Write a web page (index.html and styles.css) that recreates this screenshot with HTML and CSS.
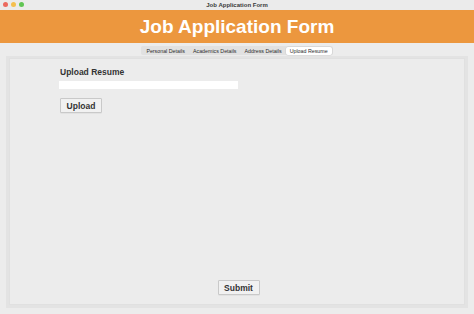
FILE: index.html
```html
<!DOCTYPE html>
<html>
<head>
<meta charset="utf-8">
<link rel="stylesheet" href="styles.css">
</head>
<body>
<div class="window">
  <div class="titlebar">
    <div class="lights">
      <span class="light red"></span>
      <span class="light yellow"></span>
      <span class="light green"></span>
    </div>
    <div class="wintitle">Job Application Form</div>
  </div>
  <div class="banner">Job Application Form</div>
  <div class="tabs">
    <div class="tabbar">
      <span class="tab">Personal Details</span>
      <span class="tab">Academics Details</span>
      <span class="tab">Address Details</span>
      <span class="tab active">Upload Resume</span>
    </div>
  </div>
  <div class="panel">
    <div class="panel-inner">
      <div class="form">
        <div class="label">Upload Resume</div>
        <div class="field"></div>
        <button class="btn upload">Upload</button>
      </div>
      <div class="footer">
        <button class="btn submit">Submit</button>
      </div>
    </div>
  </div>
</div>
</body>
</html>
```

FILE: styles.css
```css
* { box-sizing: border-box; }
html, body { margin: 0; padding: 0; }
body {
  width: 474px;
  height: 314px;
  overflow: hidden;
  font-family: "Liberation Sans", Arial, sans-serif;
  background: #ececec;
}
.window {
  display: flex;
  flex-direction: column;
  height: 314px;
}
.titlebar {
  height: 10px;
  background: #ebebeb;
  position: relative;
  display: flex;
  align-items: center;
  justify-content: center;
}
.lights {
  position: absolute;
  left: 3px;
  top: 2px;
  display: flex;
  gap: 3px;
}
.light {
  width: 5px;
  height: 5px;
  border-radius: 50%;
  display: block;
}
.red { background: #ec6a5e; }
.yellow { background: #f4bf4f; }
.green { background: #61c554; }
.wintitle {
  font-size: 6px;
  font-weight: bold;
  color: #3a3a3a;
}
.banner {
  height: 33px;
  background: #ec973e;
  color: #fff;
  font-weight: bold;
  font-size: 19px;
  display: flex;
  align-items: center;
  justify-content: center;
  padding-top: 1px;
}
.tabs {
  display: flex;
  justify-content: center;
  padding-top: 3px;
}
.tabbar {
  display: flex;
  background: #e1e1e1;
  border-radius: 2px;
  height: 9px;
  align-items: center;
  padding: 0 1px;
}
.tab {
  font-size: 5.3px;
  color: #2c2c2c;
  padding: 0 4px;
  line-height: 8px;
  height: 8px;
}
.tab.active {
  background: #fff;
  border-radius: 2px;
  box-shadow: 0 0 0 0.5px #d0d0d0;
}
.panel {
  flex: 1;
  margin: 1px 6px 6px 6px;
  border: 3px solid #e3e3e3;
  border-top-width: 2px;
  display: flex;
}
.panel-inner {
  flex: 1;
  border: 1px solid #e0e0e0;
  display: flex;
  flex-direction: column;
  background: #ececec;
}
.form {
  padding: 8px 0 0 50px;
  display: flex;
  flex-direction: column;
  align-items: flex-start;
}
.label {
  font-size: 8.5px;
  font-weight: bold;
  color: #333;
  height: 11px;
}
.field {
  margin-top: 3px;
  margin-left: -1px;
  width: 179px;
  height: 8px;
  background: #fff;
}
.btn {
  font-family: "Liberation Sans", Arial, sans-serif;
  font-weight: bold;
  font-size: 8.5px;
  color: #333;
  background: #f1f1f1;
  border: 1px solid #c9c9c9;
  border-radius: 1px;
  width: 42px;
  height: 15px;
  padding: 0;
  box-shadow: 0 0.5px 0.5px rgba(0,0,0,0.08);
}
.upload {
  margin-top: 9px;
}
.footer {
  margin-top: auto;
  display: flex;
  justify-content: center;
  padding-bottom: 9px;
  padding-left: 3px;
}
```
